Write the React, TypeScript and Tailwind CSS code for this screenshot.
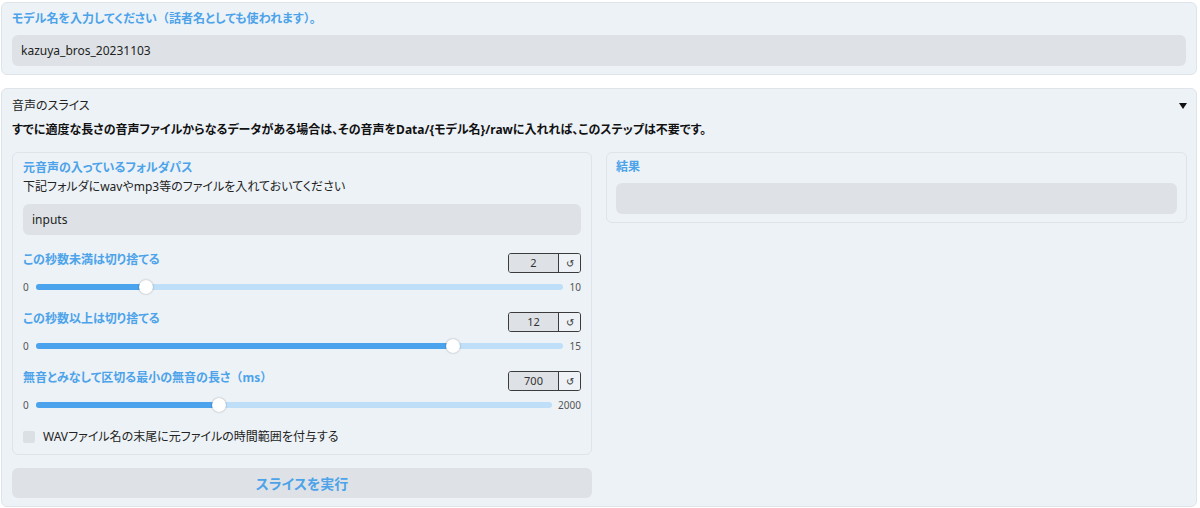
import React from "react";

const font = { fontFamily: '"Noto Sans", "Noto Sans CJK JP", sans-serif' };

function NumberBox({ value }: { value: string }) {
  return (
    <div className="flex h-[20px] w-[73px] rounded-[3px] border border-[#3b3b3b] overflow-hidden">
      <div className="flex-1 bg-[#dee2e6] flex items-center justify-center text-[11px] text-[#333] border-r border-[#3b3b3b]">
        {value}
      </div>
      <div className="w-[21px] flex items-center justify-center text-[10px] text-[#333] bg-[#eef2f6]">
        ↺
      </div>
    </div>
  );
}

function Slider({
  label,
  value,
  min,
  max,
  trackEnd,
}: {
  label: React.ReactNode;
  value: number;
  min: number;
  max: number;
  trackEnd: number;
}) {
  const pct = (value - min) / (max - min);
  return (
    <div className="flex flex-col">
      <div className="flex items-start justify-between h-[20px]">
        <span className="text-[12px] leading-[14px] font-bold text-[#4ca3e9]">{label}</span>
        <NumberBox value={String(value)} />
      </div>
      <div className="flex items-center h-[16px] mt-[6px]">
        <span className="w-[13px] text-[10px] text-[#555]">{min}</span>
        <div className="relative h-[16px]" style={{ width: trackEnd }}>
          <div className="absolute left-0 right-0 top-[5px] h-[6px] rounded-full bg-[#bfdff8]" />
          <div
            className="absolute left-0 top-[5px] h-[6px] rounded-l-full bg-[#4aa3ec]"
            style={{ width: `calc(7px + ${pct} * (100% - 14px))` }}
          />
          <div
            className="absolute top-[1px] w-[14px] h-[14px] rounded-full bg-white shadow-[0_0_2px_rgba(0,0,0,0.35)]"
            style={{ left: `calc(${pct} * (100% - 14px))` }}
          />
        </div>
        <span className="ml-auto text-[10px] text-[#555]">{max}</span>
      </div>
    </div>
  );
}

const Full = ({ children }: { children: React.ReactNode }) => (
  <span className="[font-feature-settings:normal]">{children}</span>
);

export default function App() {
  return (
    <div className="bg-white w-[1200px] h-[508px] overflow-hidden [font-feature-settings:'palt']" style={font}>
      <div className="ml-[1px] mr-[3px] mt-[2px] rounded-[6px] border border-[#dfe4ea] bg-[#edf2f7] px-[10px] pt-[6px] pb-[8px]">
        <div className="text-[12px] leading-[20px] font-bold text-[#4ca3e9]">
          モデル名を入力してください<Full>（</Full>話者名としても使われます<Full>）。</Full>
        </div>
        <div className="mt-[6px] h-[31px] rounded-[6px] bg-[#dee2e6] flex items-center px-[9px] text-[12px] text-[#222]">
          kazuya_bros_20231103
        </div>
      </div>

      <div className="ml-[1px] mr-[3px] mt-[13px] h-[419px] rounded-[6px] border border-[#dfe4ea] bg-[#edf2f7] pl-[10px] pr-[9px] pt-[7px]">
        <div className="flex items-center justify-between h-[19px]">
          <span className="text-[12px] text-[#222]">音声のスライス</span>
          <span className="w-0 h-0 border-l-[4px] border-r-[4px] border-t-[6px] border-l-transparent border-r-transparent border-t-[#111]" />
        </div>
        <div className="mt-[6px] text-[12px] leading-[18px] font-bold text-[#111]">
          すでに適度な長さの音声ファイルからなるデータがある場合は、その音声をData/&#123;モデル名&#125;/rawに入れれば、このステップは不要です。
        </div>

        <div className="mt-[13px] flex gap-[14px] items-start">
          <div className="flex flex-col w-[580px]">
            <div className="rounded-[6px] border border-[#dfe4ea] bg-[#edf2f7] px-[10px] pt-[6px] pb-[8px]">
              <div className="text-[12px] leading-[18px] font-bold text-[#4ca3e9]">
                元音声の入っているフォルダパス
              </div>
              <div className="text-[12px] leading-[20px] text-[#222]">
                下記フォルダにwavやmp3等のファイルを入れておいてください
              </div>
              <div className="mt-[7px] h-[31px] rounded-[6px] bg-[#dee2e6] flex items-center px-[9px] text-[12px] text-[#222]">
                inputs
              </div>
              <div className="mt-[18px]">
                <Slider label="この秒数未満は切り捨てる" value={2} min={0} max={10} trackEnd={527} />
              </div>
              <div className="mt-[17px]">
                <Slider label="この秒数以上は切り捨てる" value={12} min={0} max={15} trackEnd={527} />
              </div>
              <div className="mt-[17px]">
                <Slider
                  label={
                    <>
                      無音とみなして区切る最小の無音の長さ<Full>（</Full>ms<Full>）</Full>
                    </>
                  }
                  value={700}
                  min={0}
                  max={2000}
                  trackEnd={516}
                />
              </div>
              <div className="mt-[15px] h-[18px] flex items-center gap-[8px]">
                <div className="w-[12px] h-[12px] rounded-[2px] bg-[#dbe0e5]" />
                <span className="text-[12px] text-[#222]">
                  WAVファイル名の末尾に元ファイルの時間範囲を付与する
                </span>
              </div>
            </div>
            <div className="mt-[13px] h-[30px] rounded-[6px] bg-[#dee2e6] flex items-center justify-center text-[14px] font-bold text-[#4ca3e9]">
              スライスを実行
            </div>
          </div>

          <div className="flex-1 rounded-[6px] border border-[#dfe4ea] bg-[#edf2f7] px-[9px] pt-[5px] pb-[8px]">
            <div className="text-[12px] leading-[18px] font-bold text-[#4ca3e9]">結果</div>
            <div className="mt-[7px] h-[31px] rounded-[6px] bg-[#dee2e6]" />
          </div>
        </div>
      </div>
    </div>
  );
}
